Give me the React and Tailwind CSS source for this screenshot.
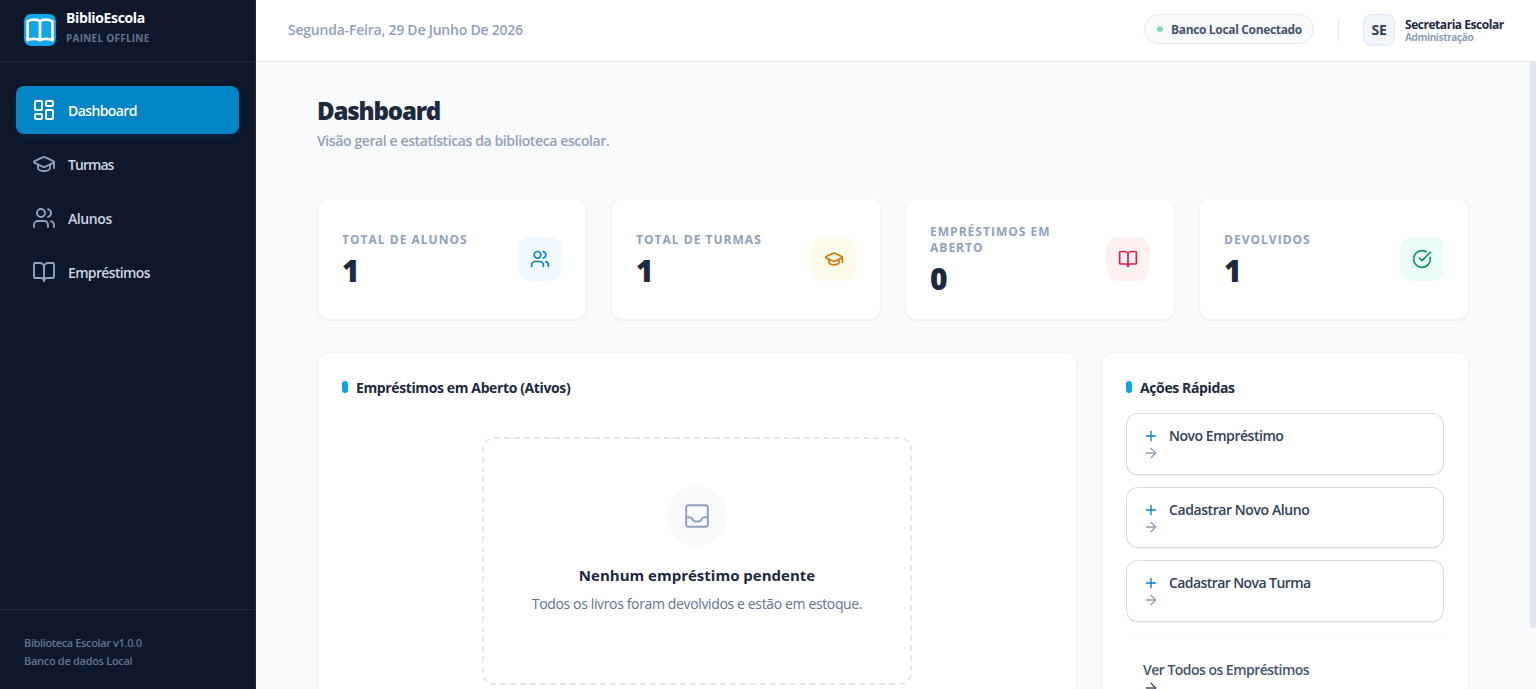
import React from 'react';
import {
  ArrowRight,
  BookOpen,
  CircleCheckBig,
  GraduationCap,
  LayoutDashboard,
  Plus,
  Users,
} from 'lucide-react';

const navItems = [
  { label: 'Dashboard', icon: LayoutDashboard, active: true, tracking: 'tracking-[-0.6px]' },
  { label: 'Turmas', icon: GraduationCap, tracking: 'tracking-[-0.95px]' },
  { label: 'Alunos', icon: Users, tracking: 'tracking-[-0.4px]' },
  { label: 'Empréstimos', icon: BookOpen, tracking: 'tracking-[-0.65px]' },
];

const stats = [
  { label: 'Total de Alunos', value: 1, icon: Users, color: 'bg-[#f0f9ff] text-[#0284c7]' },
  { label: 'Total de Turmas', value: 1, icon: GraduationCap, color: 'bg-[#fffbeb] text-[#d97706]' },
  { label: 'Empréstimos em Aberto', value: 0, icon: BookOpen, color: 'bg-[#fff1f2] text-[#e11d48]' },
  { label: 'Devolvidos', value: 1, icon: CircleCheckBig, color: 'bg-[#ecfdf5] text-[#059669]' },
];

const actions = [
  { label: 'Novo Empréstimo', tracking: 'tracking-[-0.46px]' },
  { label: 'Cadastrar Novo Aluno', tracking: 'tracking-[-0.42px]' },
  { label: 'Cadastrar Nova Turma', tracking: 'tracking-[-0.58px]' },
];

function Logo() {
  return (
    <svg viewBox="0 0 32 32" className="h-8 w-8 shrink-0" fill="none">
      <rect width="32" height="32" rx="7" fill="#0ea5e9" />
      <path
        d="M16 7.2C13.5 5.2 7 5 3.6 7.4V26.2C7 24.4 13 24.4 16 26.2C19 24.4 25 24.4 28.4 26.2V7.4C25 5 18.5 5.2 16 7.2ZM16 7.2V26.2"
        stroke="#fff"
        strokeWidth="2.8"
        strokeLinejoin="round"
        strokeLinecap="round"
      />
    </svg>
  );
}

function TrayIcon() {
  return (
    <svg viewBox="0 0 24 24" className="h-7 w-7" fill="none" stroke="currentColor" strokeWidth="1.7" strokeLinecap="round" strokeLinejoin="round">
      <rect x="2.7" y="2.7" width="18.6" height="18.6" rx="2" />
      <path d="M2.7 13h2.6c1 0 1.6.4 2.2 1.1l1.3 1.7c.5.6 1 .9 1.8.9h2.8c.8 0 1.3-.3 1.8-.9l1.3-1.7c.6-.7 1.2-1.1 2.2-1.1h2.6" />
    </svg>
  );
}

function Sidebar() {
  return (
    <aside className="w-64 shrink-0 flex flex-col bg-[#0f172a] border-r border-slate-800">
      <div className="h-[62px] shrink-0 flex items-center gap-2.5 px-6 pb-0.5 border-b border-slate-800">
        <Logo />
        <div className="pb-1">
          <h2 className="text-sm leading-5 font-bold text-white tracking-[-0.36px] whitespace-nowrap">BiblioEscola</h2>
          <p className="text-[10px] leading-5 font-bold text-slate-500 uppercase tracking-[0.25px] whitespace-nowrap">Painel Offline</p>
        </div>
      </div>

      <nav className="flex-1 flex flex-col gap-1.5 px-4 pt-6">
        {navItems.map(({ label, icon: Icon, active, tracking }) => (
          <a
            key={label}
            href="#"
            className={`flex items-center gap-3 h-12 px-4 rounded-lg text-sm font-semibold ${tracking} ${
              active ? 'bg-[#0284c7] text-white shadow-md shadow-sky-950/50' : 'text-slate-300'
            }`}
          >
            <Icon size={24} strokeWidth={1.9} className={active ? 'text-white' : 'text-slate-400'} />
            <span className="pt-0.5">{label}</span>
          </a>
        ))}
      </nav>

      <div className="h-20 shrink-0 px-6 pt-6 border-t border-slate-800 text-[11px] leading-[18px] font-semibold text-slate-500">
        <p className="tracking-[-0.37px]">Biblioteca Escolar v1.0.0</p>
        <p className="tracking-[-0.3px]">Banco de dados Local</p>
      </div>
    </aside>
  );
}

function Header() {
  return (
    <header className="h-[62px] shrink-0 flex items-center justify-between px-8 pb-0.5 bg-white border-b border-slate-200">
      <span className="text-sm font-semibold text-slate-400 tracking-[-0.22px]">Segunda-Feira, 29 De Junho De 2026</span>
      <div className="flex items-center gap-6">
        <div className="flex items-center gap-2 h-[30px] w-[170px] px-3 mb-px rounded-full bg-slate-50 border border-slate-200 whitespace-nowrap">
          <span className="w-1.5 h-1.5 shrink-0 rounded-full bg-[#7fdcbb]" />
          <span className="pt-0.5 text-xs font-bold text-slate-600 tracking-[-0.34px]">Banco Local Conectado</span>
        </div>
        <div className="w-px h-[22px] bg-slate-200" />
        <div className="flex items-center gap-2.5">
          <div className="w-8 h-8 flex items-center justify-center rounded-lg bg-slate-100 border border-slate-200 text-sm font-bold text-slate-700 tracking-[-0.3px]">
            SE
          </div>
          <div className="w-[99px] pt-0.5 whitespace-nowrap">
            <p className="text-xs leading-[13px] font-bold text-slate-800 tracking-[-0.46px]">Secretaria Escolar</p>
            <p className="text-[10px] leading-3 font-bold text-slate-400 tracking-[-0.36px]">Administração</p>
          </div>
        </div>
      </div>
    </header>
  );
}

function StatCard({ label, value, icon: Icon, color }) {
  return (
    <div className="flex items-center justify-between h-[122px] p-6 bg-white border border-slate-100 rounded-xl shadow-xs">
      <div className="max-w-[140px] pt-0.5">
        <p className="text-xs leading-4 font-bold text-slate-400 uppercase tracking-[1.02px]">{label}</p>
        <p className="mt-1 pt-px -mb-px text-3xl leading-9 font-extrabold text-slate-800">{value}</p>
      </div>
      <div className={`p-3 rounded-xl ${color}`}>
        <Icon size={20} strokeWidth={2} />
      </div>
    </div>
  );
}

function SectionTitle({ children }) {
  return (
    <h3 className="flex items-center gap-2 h-5 mb-4 text-sm font-bold text-slate-800 tracking-[-0.38px]">
      <span className="w-1.5 h-3 rounded-full bg-[#0ea5e9]" />
      <span className="pt-0.5">{children}</span>
    </h3>
  );
}

function EmptyState() {
  return (
    <div className="mt-10 mx-auto w-[430px] h-[248px] flex flex-col items-center pt-[47px] border-2 border-dashed border-gray-200 rounded-xl">
      <div className="w-[60px] h-[60px] shrink-0 flex items-center justify-center rounded-full bg-slate-50 text-slate-400">
        <TrayIcon />
      </div>
      <h4 className="mt-[17px] text-[15px] leading-6 font-bold text-slate-800">Nenhum empréstimo pendente</h4>
      <p className="mt-1.5 text-sm leading-[22px] text-slate-500 tracking-[-0.36px]">Todos os livros foram devolvidos e estão em estoque.</p>
    </div>
  );
}

function QuickActions() {
  return (
    <div className="flex flex-col">
      <div className="flex flex-col gap-3">
        {actions.map(({ label, tracking }) => (
          <button
            key={label}
            className="h-[61.5px] px-4 pt-px text-left bg-white border border-slate-300/80 rounded-xl shadow-2xs"
          >
            <span className={`flex items-center gap-2.5 h-[18px] text-sm font-semibold text-slate-700 ${tracking}`}>
              <Plus size={16} strokeWidth={2} className="text-[#0284c7]" />
              {label}
            </span>
            <ArrowRight size={16} strokeWidth={2} className="text-slate-400" />
          </button>
        ))}
      </div>
      <div className="mt-3 pt-3 border-t border-slate-50">
        <button className="pl-[17px] pt-[11px] text-left text-slate-600">
          <span className="block text-sm leading-6 font-semibold tracking-[-0.52px]">Ver Todos os Empréstimos</span>
          <ArrowRight size={16} strokeWidth={2} className="-mt-0.5" />
        </button>
      </div>
    </div>
  );
}

export default function App() {
  return (
    <div className="flex h-screen overflow-hidden bg-slate-50 font-['Open_Sans','Noto_Sans',sans-serif]">
      <Sidebar />
      <div className="flex-1 min-w-0 flex flex-col">
        <Header />
        <div className="flex-1 min-h-0 flex">
          <main className="flex-1 overflow-hidden pt-[33px]">
            <div className="w-full max-w-6xl mx-auto">
              <div className="pb-[22px] border-b border-slate-100">
                <h1 className="text-2xl leading-8 font-extrabold text-slate-800 tracking-[-1.15px]">Dashboard</h1>
                <p className="mt-1 text-sm font-semibold text-slate-400 tracking-[-0.39px]">Visão geral e estatísticas da biblioteca escolar.</p>
              </div>

              <div className="mt-6 grid grid-cols-4 gap-6">
                {stats.map((stat) => (
                  <StatCard key={stat.label} {...stat} />
                ))}
              </div>

              <div className="mt-8 grid grid-cols-3 gap-6">
                <section className="col-span-2 h-[420px] p-6 bg-white border border-slate-100 rounded-xl shadow-xs">
                  <SectionTitle>Empréstimos em Aberto (Ativos)</SectionTitle>
                  <EmptyState />
                </section>
                <section className="h-[420px] p-6 bg-white border border-slate-100 rounded-xl shadow-xs">
                  <SectionTitle>Ações Rápidas</SectionTitle>
                  <QuickActions />
                </section>
              </div>
            </div>
          </main>
          {/* scroll track */}
          <div className="w-1.5 shrink-0">
            <div className="h-[566px] rounded-full bg-slate-200" />
          </div>
        </div>
      </div>
    </div>
  );
}
